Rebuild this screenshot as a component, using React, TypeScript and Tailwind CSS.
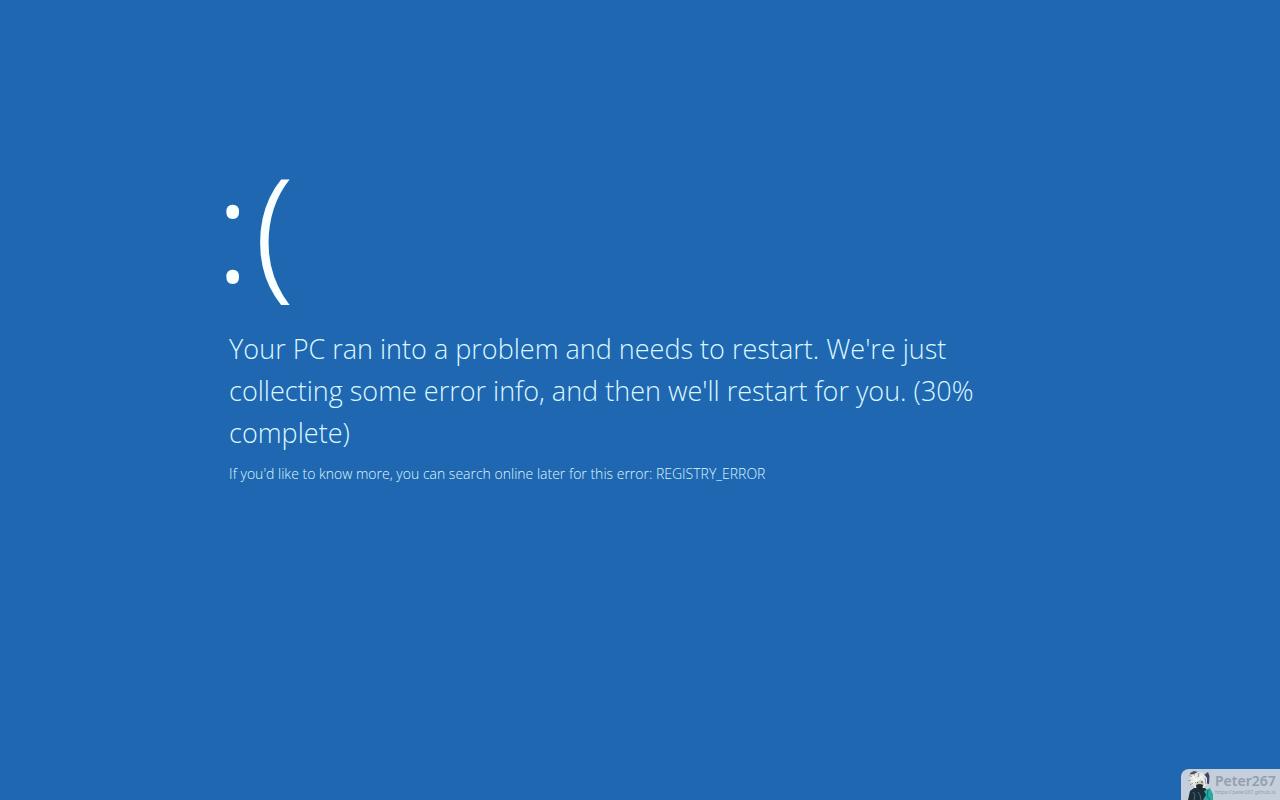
function Avatar() {
  return (
    <svg viewBox="0 0 28 30" className="h-[30px] w-7 shrink-0" aria-hidden="true">
      <path d="M16 4 L19 5 L23 2 L24.500 6 L24 14 L20 13Z" fill="#3f4468" />
      <path d="M5 3 L9 1 L13 2 L11 4 L6 6Z" fill="#4a5163" />
      <path d="M9 18 L5 21 L3 30 H26 L24 22 L20 18Z" fill="#1b2c3b" />
      <path d="M3 11 L6 7 L4 5 L9 4 L13 2 L18 3 L22 8 L22 14 L19 18 L10 18 L8 15 L5 15 L6 12Z" fill="#e3e6e2" />
      <path d="M11 11 L19 10 L19 15 L17 18 L11 17Z" fill="#cbc9c3" />
      <path d="M11 15 Q15 13 18 15 L17.500 18 L15 20 L11.500 18Z" fill="#20272a" />
      <path d="M3 11 L6 10 M4 5 L7 7 M9 4 L10 7 M14 3 L13 7 M5 15 L8 13 M20 8 L21 14" fill="none" stroke="#747d80" strokeWidth=".7" />
      <path d="M10 12.500 H13 M16 12 H18" stroke="#3b4143" strokeWidth="1" />
      <path d="M6 8 L10 6 L8 13 L12 8 L11 13 L16 6 L19 12" fill="none" stroke="#f5f5ef" strokeWidth="1.200" />
      <path d="M19 21 L25 18 L28 24 L28 30 H18 L21 25Z" fill="#28aaa0" />
      <path d="M23 20 L22 26 L25 30" fill="none" stroke="#167f80" strokeWidth="1.200" />
      <path d="M8 22 L10 25 L9 30 M13 22 L15 25 L16 30" fill="none" stroke="#5c7980" strokeWidth=".8" />
    </svg>
  );
}

export default function App() {
  return (
    <main className="flex min-h-screen flex-col justify-between overflow-hidden bg-[#2067b2] font-['Open_Sans',sans-serif]">
      <section className="ml-[17.9%] w-[60%] pt-[150px] font-light text-[#dcf8ff]">
        <h1 className="-ml-3.5 flex gap-1 font-['Noto_Sans',sans-serif] text-[144px] leading-[152px] text-[#f8ffff]"><span>:</span><span>(</span></h1>
        <p className="mt-[26px] text-[27px] leading-[42px]">
          Your PC ran into a problem and needs to restart. We're just collecting some error info, and then we'll restart for you. (30% complete)
        </p>
        <p className="mt-2 text-sm leading-6">
          If you'd like to know more, you can search online later for this error: REGISTRY_ERROR
        </p>
      </section>
      <footer className="flex h-[31px] w-[99px] items-end gap-0.5 self-end rounded-tl-lg bg-[#c5cedb] pl-1 font-['Noto_Sans',sans-serif] text-[#929eae]">
        <Avatar />
        <div className="flex h-full flex-col pt-1 whitespace-nowrap">
          <p className="text-[14px] leading-4 font-semibold">Peter267</p>
          <p className="text-[5px] leading-[6px]">https://peter267.github.io</p>
        </div>
      </footer>
    </main>
  );
}
